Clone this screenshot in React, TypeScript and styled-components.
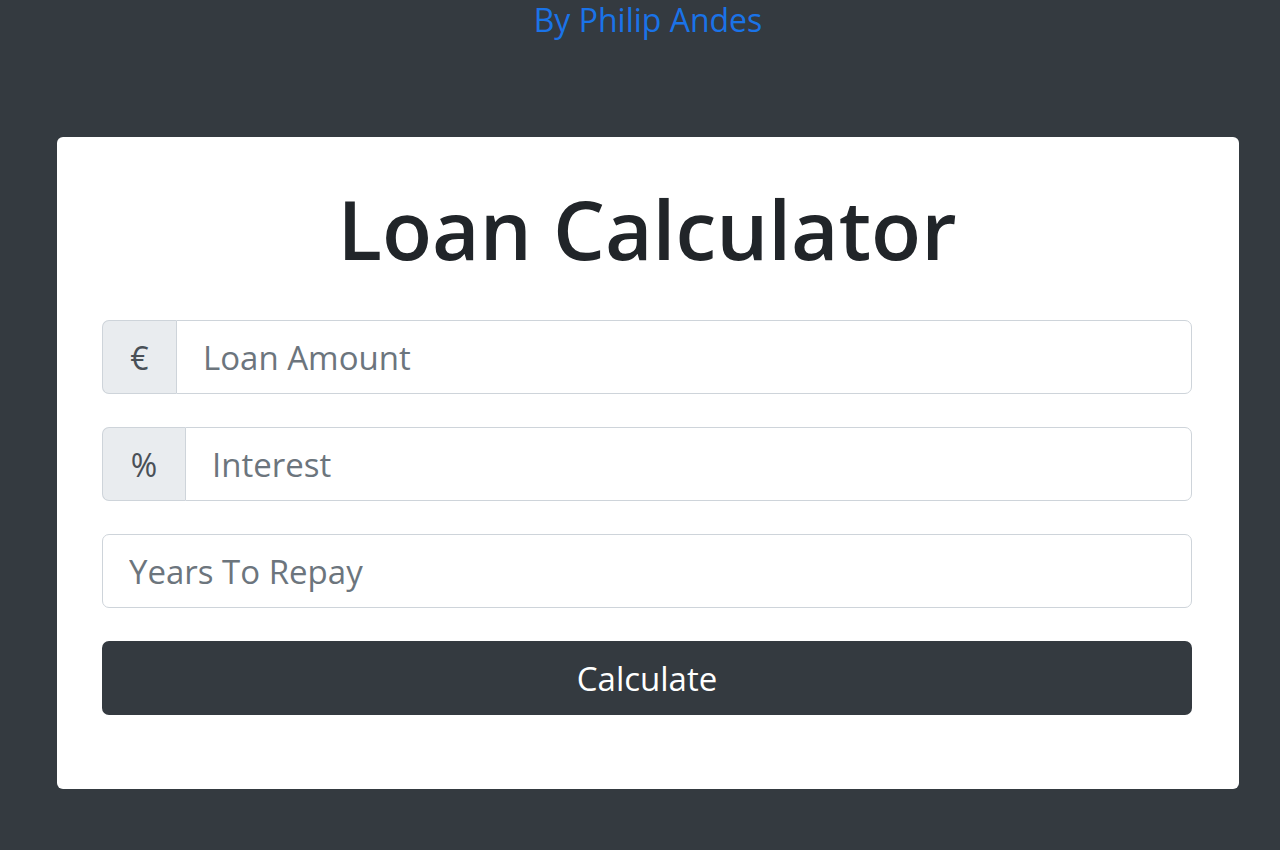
import React from "react";
import styled, { createGlobalStyle } from "styled-components";

const Global = createGlobalStyle`
  html, body {
    margin: 0;
    padding: 0;
    background: #343a40;
  }
  body {
    font-family: "Open Sans", "Noto Sans", "Liberation Sans", sans-serif;
    color: #212529;
  }
  * { box-sizing: border-box; }
  input::placeholder { color: #6c757d; opacity: 1; }
`;

const Page = styled.div`
  min-height: 850px;
  padding: 0 41px 0 57px;
  display: flex;
  flex-direction: column;
`;

const Byline = styled.div`
  text-align: center;
  color: #1a73e8;
  font-size: 32px;
  line-height: 40px;
`;

const Card = styled.div`
  margin-top: 97px;
  background: #fff;
  border-radius: 6px;
  padding: 42px 47px 74px 45px;
  display: flex;
  flex-direction: column;
  gap: 33px;
`;

const Title = styled.h1`
  margin: 0 0 10px;
  text-align: center;
  font-size: 82px;
  font-weight: 600;
  line-height: 1.2;
  color: #212529;
`;

const Group = styled.div`
  display: flex;
  height: 74px;
`;

const Addon = styled.span<{ $w: number }>`
  flex: 0 0 ${(p) => p.$w}px;
  display: flex;
  align-items: center;
  justify-content: center;
  background: #e9ecef;
  border: 1.5px solid #ced4da;
  border-right: none;
  border-radius: 7px 0 0 7px;
  color: #495057;
  font-size: 32px;
`;

const Input = styled.input<{ $joined?: boolean }>`
  flex: 1;
  min-width: 0;
  height: 74px;
  border: 1.5px solid #ced4da;
  border-radius: ${(p) => (p.$joined ? "0 7px 7px 0" : "7px")};
  padding: 0 26px;
  font-family: inherit;
  font-size: 33px;
  color: #495057;
  background: #fff;
  outline: none;
`;

const Button = styled.button`
  height: 74px;
  border: none;
  border-radius: 7px;
  background: #343a40;
  color: #fff;
  font-family: inherit;
  font-size: 33px;
  cursor: pointer;
`;

export default function App() {
  return (
    <>
      <Global />
      <Page>
        <Byline>By Philip Andes</Byline>
        <Card>
          <Title>Loan Calculator</Title>
          <Group>
            <Addon $w={74}>€</Addon>
            <Input $joined placeholder="Loan Amount" />
          </Group>
          <Group>
            <Addon $w={83}>%</Addon>
            <Input $joined placeholder="Interest" />
          </Group>
          <Group>
            <Input placeholder="Years To Repay" />
          </Group>
          <Button>Calculate</Button>
        </Card>
      </Page>
    </>
  );
}
